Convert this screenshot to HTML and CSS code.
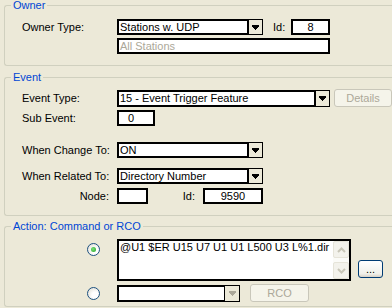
FILE: index.html
```html
<!DOCTYPE html>
<html lang="en">
<head>
    <meta charset="UTF-8">
    <title>Event Trigger</title>
    <link rel="stylesheet" href="styles.css">
</head>
<body>
    <fieldset class="group owner">
        <legend>Owner</legend>
        <div class="row first">
            <span class="label">Owner Type:</span>
            <div class="combo w146">
                <span class="value">Stations w. UDP</span>
                <span class="drop"><svg width="7" height="5" shape-rendering="crispEdges"><rect x="0" y="0" width="7" height="2"/><rect x="1" y="2" width="5" height="1"/><rect x="2" y="3" width="3" height="1"/><rect x="3" y="4" width="1" height="1"/></svg></span>
            </div>
            <span class="id-label">Id:</span>
            <div class="edit center w39">8</div>
        </div>
        <div class="row second">
            <span class="label"></span>
            <div class="edit grey w213">All Stations</div>
        </div>
    </fieldset>

    <fieldset class="group event">
        <legend>Event</legend>
        <div class="row tall first">
            <span class="label">Event Type:</span>
            <div class="combo w213 h17">
                <span class="value">15 - Event Trigger Feature</span>
                <span class="drop"><svg width="7" height="5" shape-rendering="crispEdges"><rect x="0" y="0" width="7" height="2"/><rect x="1" y="2" width="5" height="1"/><rect x="2" y="3" width="3" height="1"/><rect x="3" y="4" width="1" height="1"/></svg></span>
            </div>
            <button class="btn disabled details">Details</button>
        </div>
        <div class="row sub">
            <span class="label">Sub Event:</span>
            <div class="edit w38 pad">0</div>
        </div>
        <div class="row change">
            <span class="label">When Change To:</span>
            <div class="combo w146">
                <span class="value">ON</span>
                <span class="drop"><svg width="7" height="5" shape-rendering="crispEdges"><rect x="0" y="0" width="7" height="2"/><rect x="1" y="2" width="5" height="1"/><rect x="2" y="3" width="3" height="1"/><rect x="3" y="4" width="1" height="1"/></svg></span>
            </div>
        </div>
        <div class="row related">
            <span class="label">When Related To:</span>
            <div class="combo w146">
                <span class="value">Directory Number</span>
                <span class="drop"><svg width="7" height="5" shape-rendering="crispEdges"><rect x="0" y="0" width="7" height="2"/><rect x="1" y="2" width="5" height="1"/><rect x="2" y="3" width="3" height="1"/><rect x="3" y="4" width="1" height="1"/></svg></span>
            </div>
        </div>
        <div class="row node">
            <span class="label right">Node:</span>
            <div class="edit w31"></div>
            <span class="node-id">Id:</span>
            <div class="edit center w60">9590</div>
        </div>
    </fieldset>

    <fieldset class="group action">
        <legend>Action: Command or RCO</legend>
        <div class="row command">
            <span class="radio-cell top"><span class="radio checked"></span></span>
            <div class="memo">
                <span class="memo-text">@U1 $ER U15 U7 U1 U1 L500 U3 L%1.dir</span>
                <div class="scroll">
                    <span class="sbtn"><svg width="9" height="6"><polyline points="1,5 4.5,1.5 8,5" fill="none" stroke="#c8c6b8" stroke-width="2"/></svg></span>
                    <span class="track"></span>
                    <span class="sbtn"><svg width="9" height="6"><polyline points="1,1 4.5,4.5 8,1" fill="none" stroke="#c8c6b8" stroke-width="2"/></svg></span>
                </div>
            </div>
            <button class="btn more">...</button>
        </div>
        <div class="row tall rco">
            <span class="radio-cell"><span class="radio"></span></span>
            <div class="combo w123 h17 off">
                <span class="value"></span>
                <span class="drop"><svg width="7" height="5" shape-rendering="crispEdges"><rect x="0" y="0" width="7" height="2"/><rect x="1" y="2" width="5" height="1"/><rect x="2" y="3" width="3" height="1"/><rect x="3" y="4" width="1" height="1"/></svg></span>
            </div>
            <button class="btn disabled rco-btn">RCO</button>
        </div>
    </fieldset>
</body>
</html>
```

FILE: styles.css
```css
*,::after,::before{
    padding: 0;
    margin: 0;
    box-sizing: border-box;
}

body{
    width: 392px;
    height: 308px;
    overflow: hidden;
    background: #ece9d8;
    font-family: 'Liberation Sans', Arial, sans-serif;
    font-size: 11px;
    color: #000;
}

/* group boxes run off the right edge, so no right border */
.group{
    margin: 0 0 0 4px;
    border: 1px solid #d0d0bf;
    border-right: none;
    border-radius: 3px 0 0 3px;
    padding: 0 0 11px 0;
    min-width: 0;
}

.group legend{
    margin-left: 6px;
    padding: 0 2px;
    line-height: 13px;
    color: #0046d5;
}

.owner{ margin-top: -1px; }
.event{ margin-top: 5px; }
.action{ margin-top: 4px; padding-bottom: 4px; }

.row{
    display: flex;
    align-items: center;
    height: 16px;
}
.row.tall{ height: 18px; }

.owner .first{ margin-top: 7px; }
.owner .second{ margin-top: 3px; }
.event .first{ margin-top: 5px; }
.event .sub{ margin-top: 3px; }
.event .change{ margin-top: 16px; }
.event .related{ margin-top: 10px; }
.event .node{ margin-top: 4px; }
.action .command{ margin-top: 6px; height: 42px; align-items: flex-start; }
.action .rco{ margin-top: 3px; }

.label{
    width: 112px;
    flex: none;
    padding-left: 17px;
    white-space: nowrap;
}
.label.right{
    text-align: right;
    padding-right: 8px;
}

.edit, .combo, .memo{
    flex: none;
    height: 16px;
    background: #fff;
    border: 1px solid #000;
    box-shadow: inset 1px 1px 0 #000, inset -1px -1px 0 #000;
    line-height: 14px;
    padding: 0 2px;
    white-space: nowrap;
    overflow: hidden;
}
.edit.center{ text-align: center; }
.edit.pad{ padding-left: 10px; }
.edit.grey{ color: #aca899; }

.w31{ width: 31px; }
.w38{ width: 38px; }
.w39{ width: 39px; }
.w60{ width: 60px; }
.w123{ width: 123px; }
.w146{ width: 146px; }
.w213{ width: 213px; }
.h17{ height: 17px; align-self: flex-end; }

.combo{
    display: flex;
    padding: 0;
}
.combo .value{
    flex: 1;
    padding-left: 2px;
    line-height: 14px;
}
.combo .drop{
    width: 15px;
    flex: none;
    background: #ece9d8;
    border-left: 2px solid #000;
    display: flex;
    align-items: center;
    justify-content: center;
}
.combo .drop svg{ fill: #000; }
.combo.off .drop{ border-left-width: 1px; }
.combo.off .drop svg{ fill: #aca899; }

.id-label{
    width: 28px;
    padding-left: 10px;
    flex: none;
}

.node-id{
    width: 55px;
    flex: none;
    text-align: right;
    padding-right: 8px;
}

.btn{
    flex: none;
    font-family: inherit;
    font-size: 11px;
    height: 18px;
    border-radius: 3px;
    background: #f5f4ea;
    border: 1px solid #c9c7ba;
    color: #aca899;
    line-height: 15px;
}
.details{
    width: 58px;
    margin-left: 4px;
}
.rco-btn{
    width: 59px;
    margin-left: 10px;
}
.more{
    width: 25px;
    margin: 21px 0 0 7px;
    color: #000;
    border: 1px solid #003c74;
    background: linear-gradient(#ffffff, #f0f0ea 80%, #d6d0c5);
}

.radio-cell{
    width: 112px;
    flex: none;
    padding-left: 82px;
    display: flex;
}
.radio-cell.top{ padding-top: 4px; }

.radio{
    width: 13px;
    height: 13px;
    border-radius: 50%;
    border: 1px solid #1c5180;
    background: radial-gradient(circle at 65% 65%, #ffffff 30%, #dcd9cd 100%);
    display: flex;
    align-items: center;
    justify-content: center;
}
.radio.checked::after{
    content: "";
    width: 5px;
    height: 5px;
    border-radius: 50%;
    background: radial-gradient(circle at 40% 40%, #7be27b, #21a121);
}

.memo{
    width: 234px;
    height: 42px;
    display: flex;
    padding: 1px 1px 1px 1px;
}
.memo-text{
    flex: 1;
    padding: 0 0 0 1px;
    line-height: 13px;
}
.scroll{
    width: 16px;
    flex: none;
    display: flex;
    flex-direction: column;
    background: #fbfbf8;
}
.sbtn{
    height: 17px;
    border: 1px solid #e6e4d9;
    border-radius: 2px;
    background: #f3f2ec;
    display: flex;
    align-items: center;
    justify-content: center;
}
.track{ flex: 1; }
```
